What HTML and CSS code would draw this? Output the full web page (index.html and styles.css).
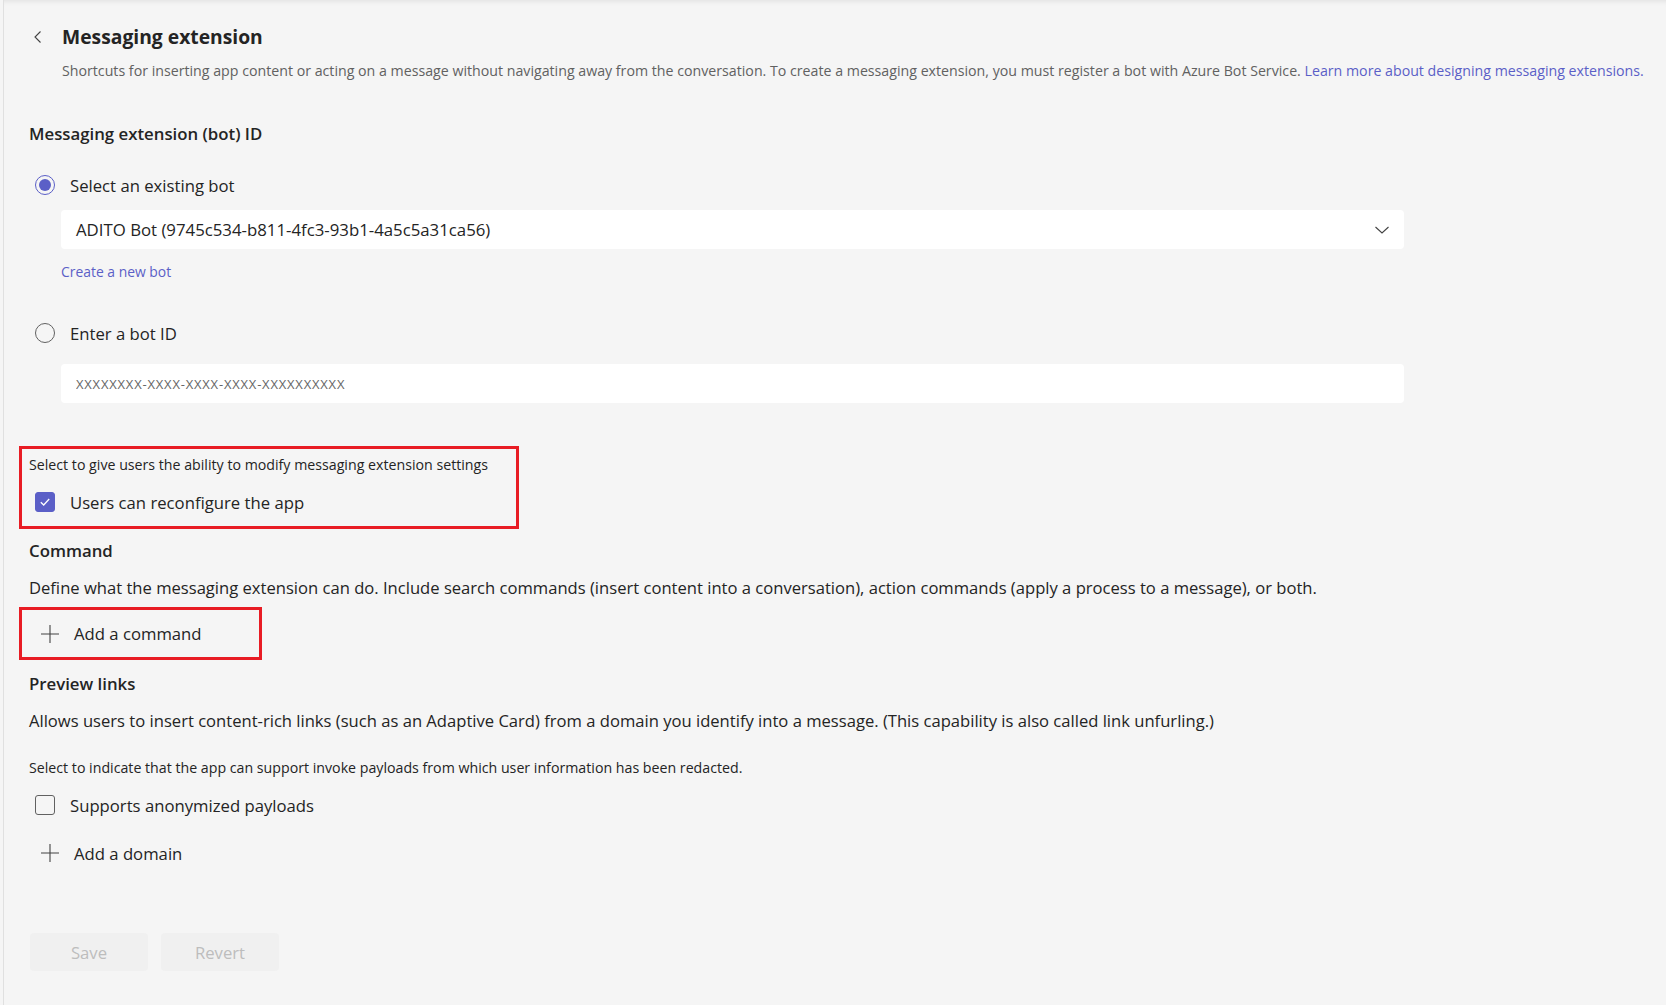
FILE: index.html
```html
<!DOCTYPE html>
<html lang="en">
<head>
    <meta charset="UTF-8">
    <title>Messaging extension</title>
    <link rel="stylesheet" href="styles.css">
</head>
<body>
    <div class="page">
        <header class="page-header">
            <div class="title-row">
                <button class="back-btn" type="button" aria-label="Back">
                    <svg width="16" height="16" viewBox="0 0 16 16"><path d="M10.5 2.5 5 8l5.5 5.5" fill="none" stroke="#424242" stroke-width="1.1"/></svg>
                </button>
                <h1>Messaging extension</h1>
            </div>
            <p class="page-desc">Shortcuts for inserting app content or acting on a message without navigating away from the conversation. To create a messaging extension, you must register a bot with Azure Bot Service. <a href="#">Learn more about designing messaging extensions.</a></p>
        </header>

        <section class="bot-section">
            <h2 class="section-title">Messaging extension (bot) ID</h2>
            <label class="option">
                <input type="radio" name="bot" checked hidden>
                <span class="radio checked"></span>
                Select an existing bot
            </label>
            <div class="dropdown">
                <span>ADITO Bot (9745c534-b811-4fc3-93b1-4a5c5a31ca56)</span>
                <svg width="16" height="16" viewBox="0 0 16 16"><path d="M1.5 5 8 11l6.5-6" fill="none" stroke="#424242" stroke-width="1.1"/></svg>
            </div>
            <a class="create-link" href="#">Create a new bot</a>
            <label class="option option-second">
                <input type="radio" name="bot" hidden>
                <span class="radio"></span>
                Enter a bot ID
            </label>
            <input class="text-input" type="text" placeholder="XXXXXXXX-XXXX-XXXX-XXXX-XXXXXXXXXX">
        </section>

        <div class="highlight highlight-reconfig">
            <p class="hint">Select to give users the ability to modify messaging extension settings</p>
            <label class="option option-check">
                <span class="checkbox checked">
                    <svg width="14" height="14" viewBox="0 0 14 14"><path d="M2.8 7.2 5.7 10l5.5-6" fill="none" stroke="#fff" stroke-width="1.3"/></svg>
                </span>
                Users can reconfigure the app
            </label>
        </div>

        <h2 class="section-title command-title">Command</h2>
        <p class="section-text">Define what the messaging extension can do. Include search commands (insert content into a conversation), action commands (apply a process to a message), or both.</p>
        <div class="highlight highlight-command">
            <button class="add-btn" type="button">
                <svg width="20" height="20" viewBox="0 0 20 20"><path d="M10 1v18M1 10h18" fill="none" stroke="#424242" stroke-width="1.1"/></svg>
                Add a command
            </button>
        </div>

        <h2 class="section-title preview-title">Preview links</h2>
        <p class="section-text">Allows users to insert content-rich links (such as an Adaptive Card) from a domain you identify into a message. (This capability is also called link unfurling.)</p>
        <p class="hint hint-payloads">Select to indicate that the app can support invoke payloads from which user information has been redacted.</p>
        <label class="option option-check option-payloads">
            <span class="checkbox"></span>
            Supports anonymized payloads
        </label>
        <button class="add-btn add-domain" type="button">
            <svg width="20" height="20" viewBox="0 0 20 20"><path d="M10 1v18M1 10h18" fill="none" stroke="#424242" stroke-width="1.1"/></svg>
            Add a domain
        </button>

        <div class="actions">
            <button class="action-btn" type="button" disabled>Save</button>
            <button class="action-btn" type="button" disabled>Revert</button>
        </div>
    </div>
</body>
</html>
```

FILE: styles.css
```css
* {
    margin: 0;
    padding: 0;
    box-sizing: border-box;
    font-family: "Segoe UI", "Open Sans", sans-serif;
}

body {
    background: #f5f5f5;
    color: #242424;
    min-height: 100vh;
}

.page {
    margin-left: 3px;
    border-left: 1px solid #e0e0e0;
    padding: 24px 0 30px 25px;
    min-height: 100vh;
    box-shadow: inset 0 6px 6px -6px rgba(0,0,0,0.12);
}

.title-row {
    display: flex;
    align-items: center;
    height: 26px;
}

.back-btn {
    background: none;
    border: none;
    width: 16px;
    height: 16px;
    margin-left: 1px;
    margin-right: 16px;
    display: flex;
}

h1 {
    font-size: 19.3px;
    font-weight: 700;
    line-height: 26px;
}

.page-desc {
    margin: 11px 0 0 33px;
    font-size: 14.2px;
    line-height: 20px;
    color: #616161;
    white-space: nowrap;
}

.page-desc a, .create-link {
    color: #5b5fc7;
    text-decoration: none;
}

.section-title {
    font-size: 16.8px;
    font-weight: 600;
    line-height: 22px;
}

.bot-section .section-title {
    margin-top: 42px;
}

.option {
    display: flex;
    align-items: center;
    gap: 15px;
    height: 24px;
    margin-left: 6px;
    margin-top: 28px;
    font-size: 16.7px;
}

.radio {
    width: 20px;
    height: 20px;
    border: 1px solid #616161;
    border-radius: 50%;
    display: flex;
    align-items: center;
    justify-content: center;
}

.radio.checked {
    border-color: #5b5fc7;
}

.radio.checked::after {
    content: "";
    width: 12px;
    height: 12px;
    border-radius: 50%;
    background: #5b5fc7;
}

.dropdown, .text-input {
    display: flex;
    align-items: center;
    justify-content: space-between;
    width: 1343px;
    height: 39px;
    margin: 13px 0 0 32px;
    padding: 0 14px 0 15px;
    background: white;
    border: none;
    border-radius: 4px;
    font-size: 16.8px;
}

.create-link {
    display: block;
    margin: 13px 0 0 32px;
    font-size: 13.9px;
    line-height: 20px;
}

.option-second {
    margin-top: 39px;
}

.text-input {
    margin-top: 19px;
    font-size: 13px;
    letter-spacing: 0.8px;
    outline: none;
}

.text-input::placeholder {
    color: #666;
}

.highlight {
    border: 3px solid #e81c24;
    margin-left: -10px;
    padding-left: 7px;
}

.highlight-reconfig {
    width: 500px;
    margin-top: 43px;
    padding-top: 6px;
    padding-bottom: 12px;
}

.hint {
    font-size: 14.2px;
    line-height: 20px;
}

.option-check {
    margin-top: 15px;
}

.checkbox {
    width: 20px;
    height: 20px;
    border: 1px solid #616161;
    border-radius: 3px;
    display: flex;
    align-items: center;
    justify-content: center;
}

.checkbox.checked {
    background: #5b5fc7;
    border-color: #5b5fc7;
}

.command-title {
    margin-top: 11px;
}

.section-text {
    margin-top: 15px;
    font-size: 16.6px;
    line-height: 22px;
}

.highlight-command {
    width: 243px;
    height: 53px;
    margin-top: 8px;
    display: flex;
    align-items: center;
}

.add-btn {
    display: flex;
    align-items: center;
    gap: 14px;
    height: 24px;
    margin-left: 11px;
    background: none;
    border: none;
    font-size: 16.7px;
    color: #242424;
}

.preview-title {
    margin-top: 13px;
}

.hint-payloads {
    margin-top: 26px;
}

.add-domain {
    margin-top: 24px;
}

.actions {
    display: flex;
    gap: 13px;
    margin-top: 68px;
    margin-left: 1px;
}

.action-btn {
    width: 118px;
    height: 38px;
    background: #f0f0f0;
    color: #bdbdbd;
    border: none;
    border-radius: 4px;
    font-size: 16.7px;
}
```
